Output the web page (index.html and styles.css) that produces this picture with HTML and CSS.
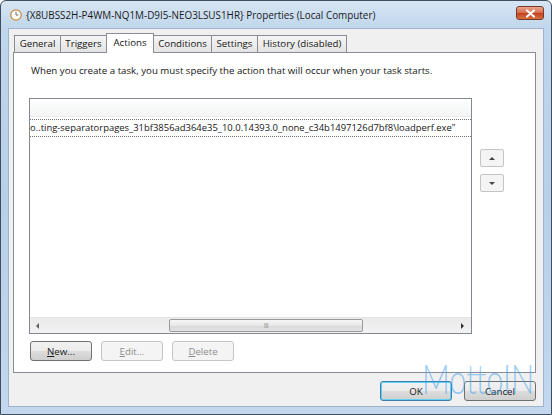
FILE: index.html
```html
<!DOCTYPE html>
<html lang="en">
  <head>
    <meta charset="utf-8" />
    <meta name="viewport" content="width=device-width, initial-scale=1" />
    <title>Properties (Local Computer)</title>
    <link rel="stylesheet" href="styles.css">
  </head>
  <body>
    <div class="window">
      <!-- title bar -->
      <div class="titlebar">
        <svg class="app-icon" width="12" height="12" viewBox="0 0 12 12">
          <circle cx="6" cy="6" r="5.2" fill="#fdfdfb" stroke="#c98a3a" stroke-width="1.2" />
          <path d="M6 2.8 V6 H8.4" fill="none" stroke="#6a6a6a" stroke-width="1" />
        </svg>
        <span class="title">{X8UBSS2H-P4WM-NQ1M-D9I5-NEO3LSUS1HR} Properties (Local Computer)</span>
        <div class="close-btn">
          <svg width="11" height="9" viewBox="0 0 11 9">
            <path d="M2 1.5 L9 7.5 M9 1.5 L2 7.5" stroke="#fff" stroke-width="2.2" stroke-linecap="round" />
          </svg>
        </div>
      </div>

      <div class="client">
        <div class="tabs">
          <div class="tab">General</div>
          <div class="tab">Triggers</div>
          <div class="tab selected">Actions</div>
          <div class="tab">Conditions</div>
          <div class="tab">Settings</div>
          <div class="tab">History (disabled)</div>
        </div>

        <div class="panel">
          <p class="hint">When you create a task, you must specify the action that will occur when your task starts.</p>

          <div class="list-area">
            <div class="listview">
              <div class="list-header"></div>
              <div class="list-row">o..ting-separatorpages_31bf3856ad364e35_10.0.14393.0_none_c34b1497126d7bf8\loadperf.exe"</div>
              <div class="list-fill"></div>
              <div class="hscroll">
                <span class="arrow-left"></span>
                <div class="track">
                  <div class="thumb"><span class="grip">III</span></div>
                </div>
                <span class="arrow-right"></span>
              </div>
            </div>
            <div class="order-btns">
              <div class="small-btn"><span class="tri-up"></span></div>
              <div class="small-btn"><span class="tri-down"></span></div>
            </div>
          </div>

          <div class="actions">
            <div class="btn"><u>N</u>ew...</div>
            <div class="btn disabled"><u>E</u>dit...</div>
            <div class="btn disabled"><u>D</u>elete</div>
          </div>
        </div>

        <div class="footer">
          <div class="btn wide default">OK</div>
          <div class="btn wide">Cancel</div>
        </div>
      </div>

      <div class="watermark">MottoIN</div>
    </div>
  </body>
</html>
```

FILE: styles.css
```css
body {
  margin: 0;
  font-family: "Open Sans", "Noto Sans", sans-serif;
  font-size: 9.7px;
  color: #161616;
}

.window {
  position: relative;
  width: 552px;
  height: 415px;
  box-sizing: border-box;
  border: 1px solid #3f4e5f;
  border-radius: 6px 6px 0 0;
  background: linear-gradient(#d6e5f4, #c0d6ec 28px, #b7cfe8 200px, #c3d8ee);
  overflow: hidden;
}

.titlebar {
  height: 27px;
  display: flex;
  align-items: center;
  padding-left: 9px;
}

.app-icon {
  margin-right: 4px;
}

.title {
  flex: 1;
  font-size: 9.9px;
  color: #1a1a1a;
}

.close-btn {
  width: 26px;
  height: 12px;
  margin-right: 7px;
  margin-top: -3px;
  border: 1px solid #7a3a28;
  border-radius: 3px;
  background: linear-gradient(#e9a68e, #d66a48 50%, #c2401f 51%, #d5703f);
  display: flex;
  align-items: center;
  justify-content: center;
}

.client {
  height: 379px;
  margin: 0 7px;
  box-sizing: border-box;
  border: 1px solid #9eb3c9;
  background: #f0f0f0;
}

/* tab strip */
.tabs {
  display: flex;
  align-items: flex-end;
  height: 19px;
  margin: 4px 0 0 5px;
  position: relative;
  z-index: 1;
}

.tab {
  width: 47px;
  height: 17px;
  box-sizing: border-box;
  border: 1px solid #898c95;
  border-bottom: none;
  margin-right: -1px;
  background: linear-gradient(#f5f5f5, #e4e4e4);
  line-height: 16px;
  text-align: center;
  white-space: nowrap;
}

.tab:nth-child(3) {
  width: 48px;
}

.tab:nth-child(4) {
  width: 59px;
}

.tab:nth-child(6) {
  width: 90px;
}

.tab.selected {
  height: 20px;
  margin-bottom: -1px;
  padding-top: 1px;
  background: #fff;
  position: relative;
}

.panel {
  height: 321px;
  margin: 0 7px 0 4px;
  box-sizing: border-box;
  border: 1px solid #898c95;
  background: #fff;
}

.hint {
  margin: 10px 0 0 17px;
  line-height: 16px;
}

.list-area {
  display: flex;
  margin: 19px 0 0 15px;
}

.listview {
  width: 443px;
  height: 236px;
  box-sizing: border-box;
  border: 1px solid #828790;
  display: flex;
  flex-direction: column;
  overflow: hidden;
}

.list-header {
  height: 17px;
  background: linear-gradient(#ffffff, #f3f4f5);
  border-bottom: 1px solid #eaeaea;
}

.list-row {
  margin-top: 2px;
  height: 16px;
  line-height: 15px;
  font-size: 9.45px;
  border-top: 1px dotted #707070;
  border-bottom: 1px dotted #707070;
  white-space: nowrap;
  overflow: hidden;
}

.list-fill {
  flex: 1;
}

.hscroll {
  height: 15px;
  display: flex;
  align-items: center;
  background: linear-gradient(#eaeaea, #f2f2f2);
  border-top: 1px solid #e4e4e4;
}

.arrow-left,
.arrow-right {
  width: 0;
  height: 0;
  border-top: 3px solid transparent;
  border-bottom: 3px solid transparent;
}

.arrow-left {
  margin: 0 0 0 6px;
  border-right: 3px solid #606060;
}

.arrow-right {
  margin: 0 7px 0 0;
  border-left: 3px solid #303030;
}

.track {
  flex: 1;
  height: 100%;
  padding-left: 130px;
  padding-right: 98px;
}

.thumb {
  height: 13px;
  margin-top: 1px;
  box-sizing: border-box;
  border: 1px solid #9a9a9a;
  border-radius: 2px;
  background: linear-gradient(#f6f6f6, #e8e8e8 50%, #d8d8d8 51%, #e2e2e2);
  display: flex;
  align-items: center;
  justify-content: center;
}

.grip {
  font-size: 7px;
  color: #8a8a8a;
  letter-spacing: -0.5px;
}

.order-btns {
  display: flex;
  flex-direction: column;
  gap: 7px;
  margin: 51px 0 0 8px;
}

.small-btn {
  width: 24px;
  height: 18px;
  box-sizing: border-box;
  border: 1px solid #c4c4c4;
  border-radius: 2px;
  background: #f4f4f4;
  display: flex;
  align-items: center;
  justify-content: center;
}

.tri-up,
.tri-down {
  width: 0;
  height: 0;
  border-left: 3px solid transparent;
  border-right: 3px solid transparent;
}

.tri-up {
  border-bottom: 3px solid #444;
}

.tri-down {
  border-top: 3px solid #444;
}

.actions {
  display: flex;
  gap: 9px;
  margin: 7px 0 0 16px;
}

.btn {
  width: 62px;
  height: 20px;
  box-sizing: border-box;
  border: 1px solid #707070;
  border-radius: 3px;
  background: linear-gradient(#f2f2f2, #ebebeb 50%, #dddddd 51%, #cfcfcf);
  display: flex;
  align-items: center;
  justify-content: center;
  color: #1a1a1a;
}

.btn.disabled {
  border-color: #c6c6c6;
  background: #f4f4f4;
  color: #8d8d8d;
}

.footer {
  display: flex;
  justify-content: flex-end;
  gap: 12px;
  margin: 8px 7px 0 0;
}

.btn.wide {
  width: 72px;
}

.btn.default {
  border-color: #3c7fb1;
  box-shadow: inset 0 0 0 1px #62d0f0;
}

.watermark {
  position: absolute;
  left: 421px;
  top: 352px;
  font-family: "Lato", sans-serif;
  font-size: 42px;
  font-weight: 300;
  transform: scaleX(0.73);
  transform-origin: left top;
  color: rgba(70, 160, 235, 0.55);
  pointer-events: none;
}
```
